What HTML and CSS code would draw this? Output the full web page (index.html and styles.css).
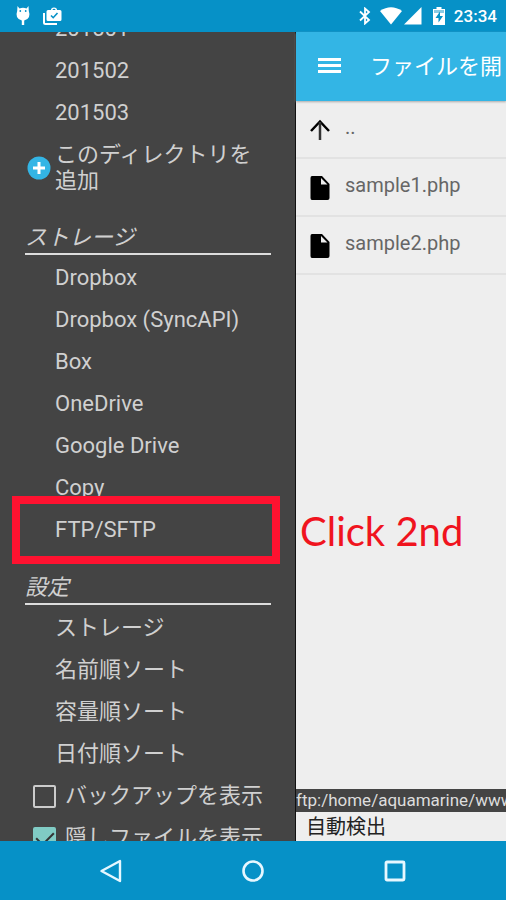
FILE: index.html
```html
<!DOCTYPE html>
<html lang="ja">
<head>
<meta charset="utf-8">
<meta name="viewport" content="width=device-width, initial-scale=1">
<title>ファイルを開く</title>
<link rel="stylesheet" href="styles.css">
</head>
<body>
<div class="screen">
  <header class="status">
    <div class="status-group notices">
      <svg width="14" height="20" viewBox="0 0 14 20" fill="#fff"><path d="M1.500 0l2 2.500Q7 1 10.500 2.500l2-2.500.3 5Q14 8 13 11q-1.500 3-4.800 3.500V19H5.800v-4.500Q2.500 14 1 11 0 8 1.200 5z"/><circle cx="4.300" cy="5" r=".9" fill="#0691c7"/><circle cx="9.700" cy="5" r=".9" fill="#0691c7"/></svg>
      <svg width="20" height="19" viewBox="0 0 20 19" fill="#fff"><path d="M1 6v9.500Q1 18 3.500 18H15v-2H3V6z"/><path d="M6 3h3q0-2.500 3-2.500T15 3h3q1.500 0 1.500 1.500v8Q19.500 14 18 14H6q-1.500 0-1.500-1.500v-8Q4.500 3 6 3zm4.500 0h3q0-1.200-1.500-1.200T10.500 3z"/><path d="M9 8.500l2.200 2.200L15.500 6" fill="none" stroke="#0691c7" stroke-width="1.600"/></svg>
    </div>
    <div class="status-group">
      <svg width="12" height="18" viewBox="0 0 12 18" fill="none" stroke="#fff" stroke-width="1.800"><path d="M1 4.500l9 8.500-4 3.500v-15L10 5 1 13.500"/></svg>
      <svg class="wifi" width="22" height="18" viewBox="0 0 22 18" fill="#fff"><path d="M0 4Q11-3.500 22 4L11 17.500z"/></svg>
      <svg width="18" height="18" viewBox="0 0 18 18" fill="#fff"><path d="M17.500 0v17.500H0z"/></svg>
      <svg class="battery" width="12" height="18" viewBox="0 0 12 18"><path d="M3.500 0h5v2H12v16H0V2h3.500z" fill="#fff"/><path d="M1 3h10v3H1z" fill="#8acbe4"/><path d="M7 4.500L2.500 11h3v4.500L10 9H7z" fill="#0691c7"/></svg>
      <time class="clock">23:34</time>
    </div>
  </header>

  <div class="body">
    <nav class="drawer">
      <ul class="list places">
        <li><a class="item" href="#">201501</a></li>
        <li><a class="item" href="#">201502</a></li>
        <li><a class="item" href="#">201503</a></li>
        <li><a class="add" href="#"><svg width="24" height="24" viewBox="0 0 24 24"><circle cx="12" cy="12" r="11.500" fill="#33b5e5"/><path d="M12 6v12M6 12h12" stroke="#fff" stroke-width="3"/></svg><span>このディレクトリを追加</span></a></li>
      </ul>
      <h2 class="heading">ストレージ</h2>
      <ul class="list">
        <li><a class="item" href="#">Dropbox</a></li>
        <li><a class="item" href="#">Dropbox (SyncAPI)</a></li>
        <li><a class="item" href="#">Box</a></li>
        <li><a class="item" href="#">OneDrive</a></li>
        <li><a class="item" href="#">Google Drive</a></li>
        <li><a class="item" href="#">Copy</a></li>
        <li><a class="item marked" href="#">FTP/SFTP</a></li>
      </ul>
      <h2 class="heading">設定</h2>
      <ul class="list">
        <li><a class="item" href="#">ストレージ</a></li>
        <li><a class="item" href="#">名前順ソート</a></li>
        <li><a class="item" href="#">容量順ソート</a></li>
        <li><a class="item" href="#">日付順ソート</a></li>
        <li><label class="option"><input type="checkbox">バックアップを表示</label></li>
        <li><label class="option"><input type="checkbox" checked>隠しファイルを表示</label></li>
      </ul>
    </nav>

    <main class="content">
      <div class="toolbar">
        <button class="menu" aria-label="メニュー"><svg width="24" height="16" viewBox="0 0 24 16" fill="#fff"><path d="M0 0h23v3H0zM0 6h23v3H0zM0 12h23v3H0z"/></svg></button>
        <h1 class="title">ファイルを開</h1>
      </div>
      <ul class="list files">
        <li><a class="file" href="#"><svg width="20" height="24" viewBox="0 0 20 24" fill="none" stroke="#000" stroke-width="2.500"><path d="M1 13l9-9.500 9 9.500"/><path d="M10 4v18" stroke="#333"/></svg><span>..</span></a></li>
        <li><a class="file" href="#"><svg width="20" height="26" viewBox="0 0 20 26"><path d="M2 1h10l7.500 8v14q0 2-2 2H2q-1.500 0-1.500-2V3Q.5 1 2 1zm9 2v6.500h6.500z" fill="#000" fill-rule="evenodd"/></svg><span>sample1.php</span></a></li>
        <li><a class="file" href="#"><svg width="20" height="26" viewBox="0 0 20 26"><path d="M2 1h10l7.500 8v14q0 2-2 2H2q-1.500 0-1.500-2V3Q.5 1 2 1zm9 2v6.500h6.500z" fill="#000" fill-rule="evenodd"/></svg><span>sample2.php</span></a></li>
      </ul>
      <p class="callout">Click 2nd</p>
      <div class="path">ftp:/home/aquamarine/www</div>
      <select class="encoding" aria-label="文字コード"><option>自動検出</option></select>
    </main>
  </div>

  <footer class="navbar">
    <button aria-label="戻る"><svg width="24" height="24" viewBox="0 0 24 24" fill="none" stroke="#e6f7ff" stroke-width="2.400" stroke-linejoin="round"><path d="M21 2v20L2.500 12z"/></svg></button>
    <button aria-label="ホーム"><svg width="24" height="24" viewBox="0 0 24 24" fill="none" stroke="#e6f7ff" stroke-width="2.600"><circle cx="12" cy="12" r="9.500"/></svg></button>
    <button aria-label="履歴"><svg width="24" height="24" viewBox="0 0 24 24" fill="none" stroke="#e6f7ff" stroke-width="2.800"><rect x="3" y="3" width="18" height="18" rx="1"/></svg></button>
  </footer>
</div>
</body>
</html>
```
FILE: styles.css
```css
* {
  box-sizing: border-box;
}

body {
  margin: 0;
  font-family: Roboto, "Noto Sans CJK JP", sans-serif;
  font-size: 22px;
  color: #d0d0d0;
}

a {
  color: inherit;
  text-decoration: none;
}

button {
  padding: 0;
  border: 0;
  background: none;
}

svg {
  display: block;
  flex: none;
}

.screen {
  display: flex;
  flex-direction: column;
  height: 100vh;
  overflow: hidden;
}

.status {
  display: flex;
  justify-content: space-between;
  align-items: center;
  flex: none;
  height: 32px;
  padding: 0 9px 0 16px;
  background: #0691c7;
}

.status-group {
  display: flex;
  align-items: center;
}

.notices {
  gap: 12px;
}

.wifi {
  margin: 0 2px 0 9px;
}

.battery {
  margin: 0 9px 0 11px;
}

.clock {
  font-size: 17px;
  font-weight: 500;
  color: #fff;
}

.body {
  display: flex;
  flex: 1;
  min-height: 0;
}

.drawer {
  flex: none;
  width: 296px;
  overflow: hidden;
  background: #444;
  border-right: 1px solid #111;
}

.list {
  margin: 0;
  padding: 0;
  list-style: none;
}

.places {
  margin-top: -24px;
}

.item {
  display: block;
  padding-left: 55px;
  line-height: 42px;
}

.add {
  display: flex;
  align-items: center;
  gap: 4px;
  height: 67px;
  padding: 0 24px 0 27px;
  line-height: 26px;
}

.heading {
  height: 54px;
  margin: 0 24px 2px 25px;
  padding-top: 21px;
  border-bottom: 2px solid #ddd;
  font-size: 22px;
  font-weight: 400;
  font-style: italic;
  line-height: 32px;
}

.marked {
  position: relative;
}

.marked::after {
  content: "";
  position: absolute;
  inset: -13px 15px -13px 12px;
  border: 8px solid #ff1230;
}

.option {
  display: flex;
  align-items: center;
  gap: 9px;
  padding-left: 33px;
  line-height: 42px;
  white-space: nowrap;
}

.option input {
  appearance: none;
  flex: none;
  width: 23px;
  height: 23px;
  margin: 0;
  border: 2px solid #ccc;
  border-radius: 2px;
}

.option input:checked {
  display: grid;
  place-items: center;
  border-color: #80cbc4;
  background: #80cbc4;
}

.option input:checked::after {
  content: "";
  width: 8px;
  height: 15px;
  border: solid #333;
  border-width: 0 2px 2px 0;
  transform: translateY(-2px) rotate(45deg);
}

.content {
  position: relative;
  display: flex;
  flex-direction: column;
  flex: 1;
  min-width: 0;
  background: #eee;
}

.toolbar {
  display: flex;
  align-items: center;
  flex: none;
  gap: 28px;
  height: 69px;
  padding: 0 0 2px 22px;
  overflow: hidden;
  background: #33b5e5;
  box-shadow: 0 1px 2px #aaa;
}

.title {
  margin: 0;
  padding-bottom: 4px;
  font-size: 22px;
  font-weight: 400;
  color: #fff;
  white-space: nowrap;
}

.files {
  flex: 1;
  font-size: 20px;
  color: #666;
}

.file {
  display: flex;
  align-items: center;
  gap: 15px;
  height: 58px;
  padding: 2px 0 0 14px;
  border-bottom: 2px solid #e2e2e2;
}

.file span {
  padding-bottom: 6px;
}

.callout {
  position: absolute;
  top: 475px;
  left: 4px;
  margin: 0;
  font-family: Lato, sans-serif;
  font-size: 40px;
  line-height: 48px;
  color: #f0141e;
  white-space: nowrap;
}

.path {
  flex: none;
  overflow: hidden;
  background: #444;
  font-size: 17px;
  line-height: 23px;
  color: #ddd;
  white-space: nowrap;
}

.encoding {
  appearance: none;
  flex: none;
  height: 29px;
  padding: 0 10px;
  border: 0;
  border-radius: 0;
  background: #eee;
  font-family: inherit;
  font-size: 20px;
  color: #222;
}

.navbar {
  display: flex;
  justify-content: center;
  align-items: center;
  flex: none;
  gap: 118px;
  height: 59px;
  background: #0691c7;
}
```
